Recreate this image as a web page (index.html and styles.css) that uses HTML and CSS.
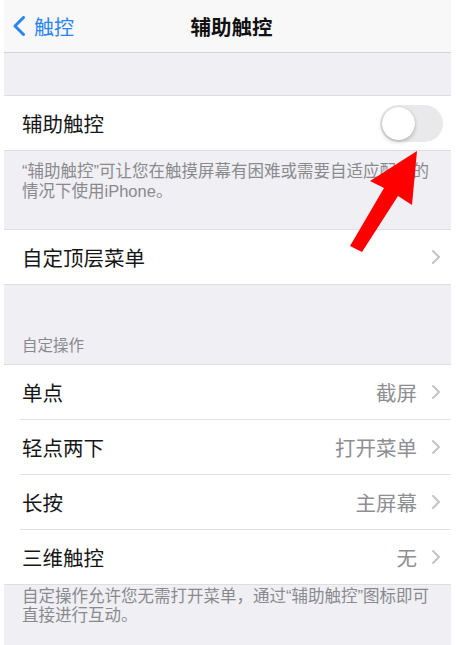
FILE: index.html
```html
<!DOCTYPE html>
<html lang="zh-CN">
<head>
<meta charset="utf-8">
<title>辅助触控</title>
<link rel="stylesheet" href="styles.css">
</head>
<body>
<div class="screen">
  <header class="nav">
    <div class="back">
      <svg class="back-icon" width="14" height="20" viewBox="0 0 14 20"><path d="M11.5 1.5 L3 10 L11.5 18.5" fill="none" stroke="#2a84f6" stroke-width="3" stroke-linecap="round" stroke-linejoin="round"/></svg>
      <span>触控</span>
    </div>
    <div class="title">辅助触控</div>
    <div></div>
  </header>
  <div class="spacer"></div>
  <section class="group">
    <div class="row">
      <span class="label">辅助触控</span>
      <span class="switch"><span class="knob"></span></span>
    </div>
  </section>
  <p class="footer f1">“辅助触控”可让您在触摸屏幕有困难或需要自适应配件的情况下使用iPhone。</p>
  <section class="group">
    <div class="row">
      <span class="label">自定顶层菜单</span>
      <span class="right"><svg class="chev" width="10" height="16" viewBox="0 0 10 16"><path d="M2 2 L8 8 L2 14" fill="none" stroke="#c4c4c8" stroke-width="2" stroke-linecap="round" stroke-linejoin="round"/></svg></span>
    </div>
  </section>
  <div class="header">自定操作</div>
  <section class="group">
    <div class="row">
      <span class="label">单点</span>
      <span class="right"><span class="value">截屏</span><svg class="chev" width="10" height="16" viewBox="0 0 10 16"><path d="M2 2 L8 8 L2 14" fill="none" stroke="#c4c4c8" stroke-width="2" stroke-linecap="round" stroke-linejoin="round"/></svg></span>
    </div>
    <div class="row">
      <span class="label">轻点两下</span>
      <span class="right"><span class="value">打开菜单</span><svg class="chev" width="10" height="16" viewBox="0 0 10 16"><path d="M2 2 L8 8 L2 14" fill="none" stroke="#c4c4c8" stroke-width="2" stroke-linecap="round" stroke-linejoin="round"/></svg></span>
    </div>
    <div class="row">
      <span class="label">长按</span>
      <span class="right"><span class="value">主屏幕</span><svg class="chev" width="10" height="16" viewBox="0 0 10 16"><path d="M2 2 L8 8 L2 14" fill="none" stroke="#c4c4c8" stroke-width="2" stroke-linecap="round" stroke-linejoin="round"/></svg></span>
    </div>
    <div class="row">
      <span class="label">三维触控</span>
      <span class="right"><span class="value">无</span><svg class="chev" width="10" height="16" viewBox="0 0 10 16"><path d="M2 2 L8 8 L2 14" fill="none" stroke="#c4c4c8" stroke-width="2" stroke-linecap="round" stroke-linejoin="round"/></svg></span>
    </div>
  </section>
  <p class="footer f2">自定操作允许您无需打开菜单，通过“辅助触控”图标即可直接进行互动。</p>
</div>
<svg class="arrow" width="456" height="645" viewBox="0 0 456 645">
  <polygon points="417,151 412,205 398,196 362,252 350,246 384,188 370,181" fill="#ff0000"/>
</svg>
</body>
</html>
```

FILE: styles.css
```css
html, body {
  margin: 0;
  padding: 0;
  background: #ffffff;
}

body {
  position: relative;
  width: 456px;
  height: 645px;
  overflow: hidden;
  font-family: "Liberation Sans", "Noto Sans CJK SC", sans-serif;
}

.screen {
  margin: 0 5px 0 4px;
  height: 645px;
  background: #efeff4;
}

.nav {
  height: 52px;
  background: #f8f8f8;
  border-bottom: 1px solid #d4d4d8;
  display: grid;
  grid-template-columns: 1fr auto 1fr;
  align-items: center;
}

.back {
  display: flex;
  align-items: center;
  gap: 8px;
  padding-left: 8px;
  color: #2a84f6;
  font-size: 20px;
}

.back-icon {
  display: block;
}

.title {
  font-size: 20.5px;
  font-weight: 600;
  color: #111;
  padding-left: 8px;
}

.spacer {
  height: 42px;
}

.group {
  background: #fff;
  border-top: 1px solid #dedee2;
  border-bottom: 1px solid #dedee2;
}

.row {
  position: relative;
  height: 54px;
  display: flex;
  align-items: center;
  justify-content: space-between;
  padding: 0 10px 0 18px;
}

.row + .row {
  border-top: 1px solid transparent;
}

.row + .row::before {
  content: "";
  position: absolute;
  top: -1px;
  left: 16px;
  right: 0;
  height: 1px;
  background: #e2e2e6;
}

.label {
  font-size: 20.5px;
  color: #161618;
}

.right {
  display: flex;
  align-items: center;
  gap: 14px;
}

.value {
  font-size: 20.5px;
  color: #8e8e93;
}

.chev {
  display: block;
}

.switch {
  position: relative;
  width: 63px;
  height: 37px;
  margin-right: -2px;
  border-radius: 19px;
  background: #e9e9eb;
}

.knob {
  position: absolute;
  top: 2px;
  left: 2px;
  width: 33px;
  height: 33px;
  border-radius: 50%;
  background: #fff;
  box-shadow: 0 2px 4px rgba(0, 0, 0, 0.22), 0 0 1px rgba(0, 0, 0, 0.2);
}

.footer {
  margin: 0;
  font-size: 16.5px;
  line-height: 19.5px;
  color: #8a8a8e;
  padding: 0 18px;
}

.f1 {
  padding-top: 11px;
  padding-bottom: 28px;
}

.f2 {
  padding-top: 2px;
}

.header {
  font-size: 15.5px;
  line-height: 19.5px;
  color: #8a8a8e;
  padding: 51px 18px 8px;
}

.arrow {
  position: absolute;
  top: 0;
  left: 0;
  pointer-events: none;
}
```
